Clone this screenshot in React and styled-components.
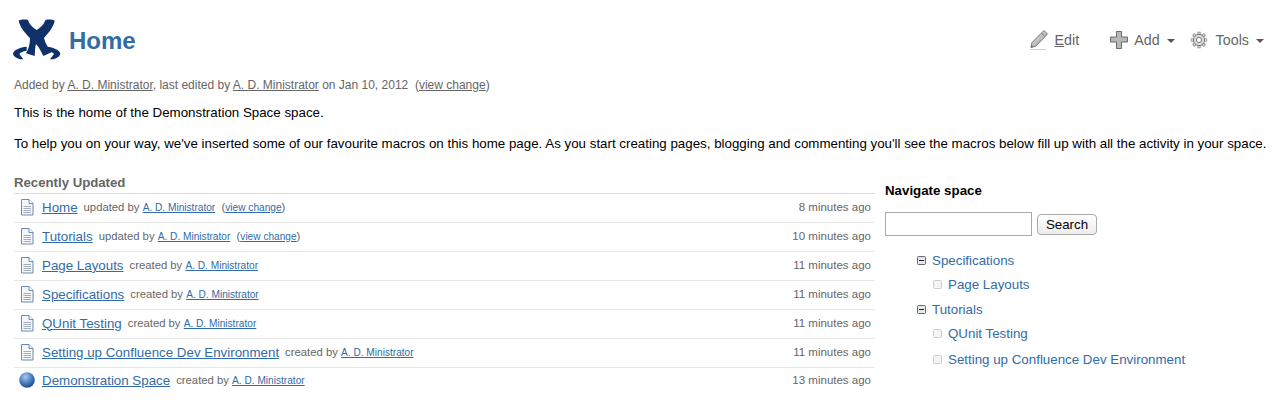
import React from "react";
import styled, { createGlobalStyle } from "styled-components";

const Global = createGlobalStyle`
  html, body { margin: 0; padding: 0; background: #fff; }
  body { font-family: "Liberation Sans", Arial, sans-serif; font-size: 13px; color: #000; }
`;
const Page = styled.div`
  width: 1287px; height: 406px; overflow: hidden; padding: 0 14px; box-sizing: border-box;
`;
const Header = styled.header`
  display: flex; align-items: center; justify-content: space-between; height: 62px; padding-top: 10px;
`;
const TitleWrap = styled.div`display: flex; align-items: center; gap: 3px; margin-left: -4px;`;
const LogoMark = styled.svg`margin-top: -2px; flex: none;`;
const Title = styled.h1`
  margin: 0; font-size: 24px; line-height: 30px; font-weight: bold; color: #326ca6;
`;
const Actions = styled.div`display: flex; align-items: center; color: #666; font-size: 14.3px; padding-right: 9px; margin-top: -2px;`;
const Action = styled.div`
  display: flex; align-items: center; gap: ${p => p.$gap}px; margin-left: ${p => p.$left}px;
`;
const Caret = styled.span`
  width: 0; height: 0; border: 4px solid transparent; border-top-color: #555; border-bottom: 0; margin-left: 1px; margin-top: 1px;
`;
const GearMark = styled.svg`margin-right: 2px; flex: none;`;
const Meta = styled.div`
  margin-top: 6px; font-size: 12px; line-height: 15px; color: #666;
  a { color: #666; text-decoration: underline; }
`;
const Para = styled.p`margin: ${p => p.$top}px 0 0; font-size: 13.33px; line-height: 17px; white-space: nowrap;`;
const Columns = styled.div`display: flex; margin-top: 22px;`;
const Left = styled.section`width: 861px; flex: none;`;
const SectionHead = styled.h3`
  margin: 0; font-size: 13.2px; line-height: 17px; font-weight: bold; color: #666; padding-bottom: 2px; border-bottom: 1px solid #ddd;
`;
const List = styled.ul`list-style: none; margin: 0; padding: 0;`;
const Row = styled.li`
  display: flex; align-items: center; height: 26px; padding-bottom: 2px; border-bottom: 1px solid #e8e8e8; padding-left: ${p => p.$globe ? 5 : 6}px; white-space: nowrap;
  &:last-child { border-bottom: 0; height: 24px; padding-bottom: 4px; }
`;
const Icon = styled.span`display: flex; width: 16px; margin-right: ${p => p.$globe ? 7 : 6}px; flex: none;`;
const PageLink = styled.a`color: #326ca6; text-decoration: underline; font-size: 13.33px;`;
const Info = styled.span`
  margin-left: 6px; color: #666; font-size: 11.3px;
  a { color: #326ca6; text-decoration: underline; font-size: 10.15px; }
`;
const Time = styled.span`margin-left: auto; color: #666; font-size: 11.5px; padding-right: 4px;`;
const Right = styled.aside`margin-left: 10px; flex: 1; padding-top: 9px;`;
const NavHead = styled.h4`margin: 0; font-size: 13.3px; line-height: 16px; font-weight: bold;`;
const SearchRow = styled.div`display: flex; align-items: center; gap: 5px; margin-top: 13px;`;
const SearchInput = styled.input`
  width: 147px; height: 24px; box-sizing: border-box; border: 1px solid #aaa; padding: 0; background: #fff;
`;
const SearchButton = styled.button`
  width: 60px; height: 21px; box-sizing: border-box; border: 1px solid #aaa; border-radius: 4px; padding: 0;
  background: linear-gradient(#fff, #ececec); font: 13.33px "Liberation Sans", Arial, sans-serif; color: #000;
`;
const Tree = styled.ul`list-style: none; margin: 12px 0 0; padding: 0 0 0 ${p => p.$indent}px;`;
const Node = styled.li`
  display: flex; align-items: center; height: ${p => p.$h}px; margin-left: ${p => p.$child ? 16 : 0}px;
`;
const TreeLink = styled.a`color: #326ca6; font-size: 13.33px; margin-left: 6px; white-space: nowrap;`;

const Logo = () => (
  <LogoMark width="56" height="48" viewBox="0 0 168 144">
    <path fill="#0f3068" d="M26 14 C34 10 46 10 54 12 C57 22 64 32 80 42 C96 32 103 22 106 12 C114 10 126 10 134 14 C130 34 116 50 102 66 C106 84 116 98 126 108 L100 120 C92 104 86 92 78 84 C74 96 76 106 74 120 L48 112 C56 100 60 84 60 66 C46 52 30 34 26 14 Z" />
    <path fill="#0f3068" d="M50 92 C30 94 10 102 9 113 C10 120 18 126 30 130 L40 130 L28 114 C30 110 38 106 50 104 Z" />
    <path fill="#0f3068" d="M110 92 C130 94 150 102 151 113 C150 120 142 126 130 130 L120 130 L132 114 C130 110 122 106 110 104 Z" />
  </LogoMark>
);
const Pencil = () => (
  <svg width="21" height="22" viewBox="0 0 21 22">
    <defs>
      <linearGradient id="pen" x1="0" y1="0" x2="1" y2="1">
        <stop offset="0" stopColor="#e8e8e8" />
        <stop offset="1" stopColor="#999" />
      </linearGradient>
    </defs>
    <path fill="url(#pen)" stroke="#777" d="M16 1.5 L19.5 5 L8 17 L3 18.5 L4 13.5 Z" />
    <path fill="none" stroke="#777" d="M13.5 4 L17 7.5" />
    <path fill="#555" d="M3 18.5 L4 16.5 L5 18 Z" />
    <path fill="#aaa" d="M2 20 H18 V21 H2 Z" opacity=".5" />
  </svg>
);
const Plus = () => (
  <svg width="18" height="18" viewBox="0 0 18 18">
    <path fill="#b8b8b8" stroke="#6a6a6a" d="M6.5 .5 H11.5 V6 H17.5 V11 H11.5 V17.5 H6.5 V11 H.5 V6 H6.5 Z" />
  </svg>
);
const Gear = () => (
  <GearMark width="18" height="18" viewBox="0 0 18 18">
    <path stroke="#888" strokeWidth="3.2" d="M9 .8V3.5 M9 14.5V17.2 M.8 9H3.5 M14.5 9H17.2 M3.2 3.2L5 5 M13 13L14.8 14.8 M3.2 14.8L5 13 M13 5L14.8 3.2" />
    <path stroke="#e4e4e4" strokeWidth="1.4" d="M9 1.4V3.5 M9 14.5V16.6 M1.4 9H3.5 M14.5 9H16.6 M3.6 3.6L5 5 M13 13L14.4 14.4 M3.6 14.4L5 13 M13 5L14.4 3.6" />
    <circle cx="9" cy="9" r="5.6" fill="#dcdcdc" stroke="#777" />
    <circle cx="9" cy="9" r="2.6" fill="#fff" stroke="#777" />
  </GearMark>
);
const Doc = () => (
  <svg width="14" height="17" viewBox="0 0 14 17">
    <path fill="#f4f6fa" stroke="#6f88ab" d="M1.5 .5 H9 L13 4.5 V16 H1.5 Z" />
    <path fill="#fff" stroke="#6f88ab" d="M9 .5 V4.5 H13" />
    <path stroke="#a3aebf" d="M3.5 7.5H11 M3.5 9.5H11 M3.5 11.5H11 M3.5 13.5H11" />
  </svg>
);
const Globe = () => (
  <svg width="16" height="16" viewBox="0 0 16 16">
    <defs>
      <radialGradient id="g" cx="40%" cy="30%" r="75%">
        <stop offset="0" stopColor="#a9c7ec" />
        <stop offset=".55" stopColor="#4a7cc0" />
        <stop offset="1" stopColor="#1c3f7c" />
      </radialGradient>
    </defs>
    <circle cx="8" cy="8" r="7.8" fill="url(#g)" />
  </svg>
);
const Minus = () => (
  <svg width="9" height="9" viewBox="0 0 9 9">
    <rect x=".5" y=".5" width="8" height="8" rx="1" fill="#e4e8ec" stroke="#667" />
    <path stroke="#222" d="M2 4.5H7" />
  </svg>
);
const Leaf = () => (
  <svg width="9" height="9" viewBox="0 0 9 9">
    <rect x=".5" y=".5" width="8" height="8" rx="1" fill="#f4f4f4" stroke="#ccc" />
  </svg>
);

const rows = [
  ["Home", "updated", true, "8 minutes ago"],
  ["Tutorials", "updated", true, "10 minutes ago"],
  ["Page Layouts", "created", false, "11 minutes ago"],
  ["Specifications", "created", false, "11 minutes ago"],
  ["QUnit Testing", "created", false, "11 minutes ago"],
  ["Setting up Confluence Dev Environment", "created", false, "11 minutes ago"],
  ["Demonstration Space", "created", false, "13 minutes ago", true],
];

export default function App() {
  return (
    <Page>
      <Global />
      <Header>
        <TitleWrap>
          <Logo />
          <Title>Home</Title>
        </TitleWrap>
        <Actions>
          <Action $gap={6}><Pencil /><span><u>E</u>dit</span></Action>
          <Action $left={31} $gap={6}><Plus /><span>Add</span><Caret /></Action>
          <Action $left={15} $gap={6}><Gear /><span>Tools</span><Caret /></Action>
        </Actions>
      </Header>
      <Meta>
        Added by <a>A. D. Ministrator</a>, last edited by <a>A. D. Ministrator</a> on Jan 10, 2012 &nbsp;(<a>view change</a>)
      </Meta>
      <Para $top={11}>This is the home of the Demonstration Space space.</Para>
      <Para $top={14}>To help you on your way, we've inserted some of our favourite macros on this home page. As you start creating pages, blogging and commenting you'll see the macros below fill up with all the activity in your space.</Para>
      <Columns>
        <Left>
          <SectionHead>Recently Updated</SectionHead>
          <List>
            {rows.map(([name, verb, change, time, globe]) => (
              <Row key={name} $globe={globe}>
                <Icon $globe={globe}>{globe ? <Globe /> : <Doc />}</Icon>
                <PageLink>{name}</PageLink>
                <Info>
                  {verb} by <a>A. D. Ministrator</a>
                  {change && <> &nbsp;(<a>view change</a>)</>}
                </Info>
                <Time>{time}</Time>
              </Row>
            ))}
          </List>
        </Left>
        <Right>
          <NavHead>Navigate space</NavHead>
          <SearchRow>
            <SearchInput />
            <SearchButton>Search</SearchButton>
          </SearchRow>
          <Tree $indent={32}>
            <Node $h={24}><Minus /><TreeLink>Specifications</TreeLink></Node>
            <Node $h={25} $child><Leaf /><TreeLink>Page Layouts</TreeLink></Node>
            <Node $h={24}><Minus /><TreeLink>Tutorials</TreeLink></Node>
            <Node $h={24} $child><Leaf /><TreeLink>QUnit Testing</TreeLink></Node>
            <Node $h={29} $child><Leaf /><TreeLink>Setting up Confluence Dev Environment</TreeLink></Node>
          </Tree>
        </Right>
      </Columns>
    </Page>
  );
}
